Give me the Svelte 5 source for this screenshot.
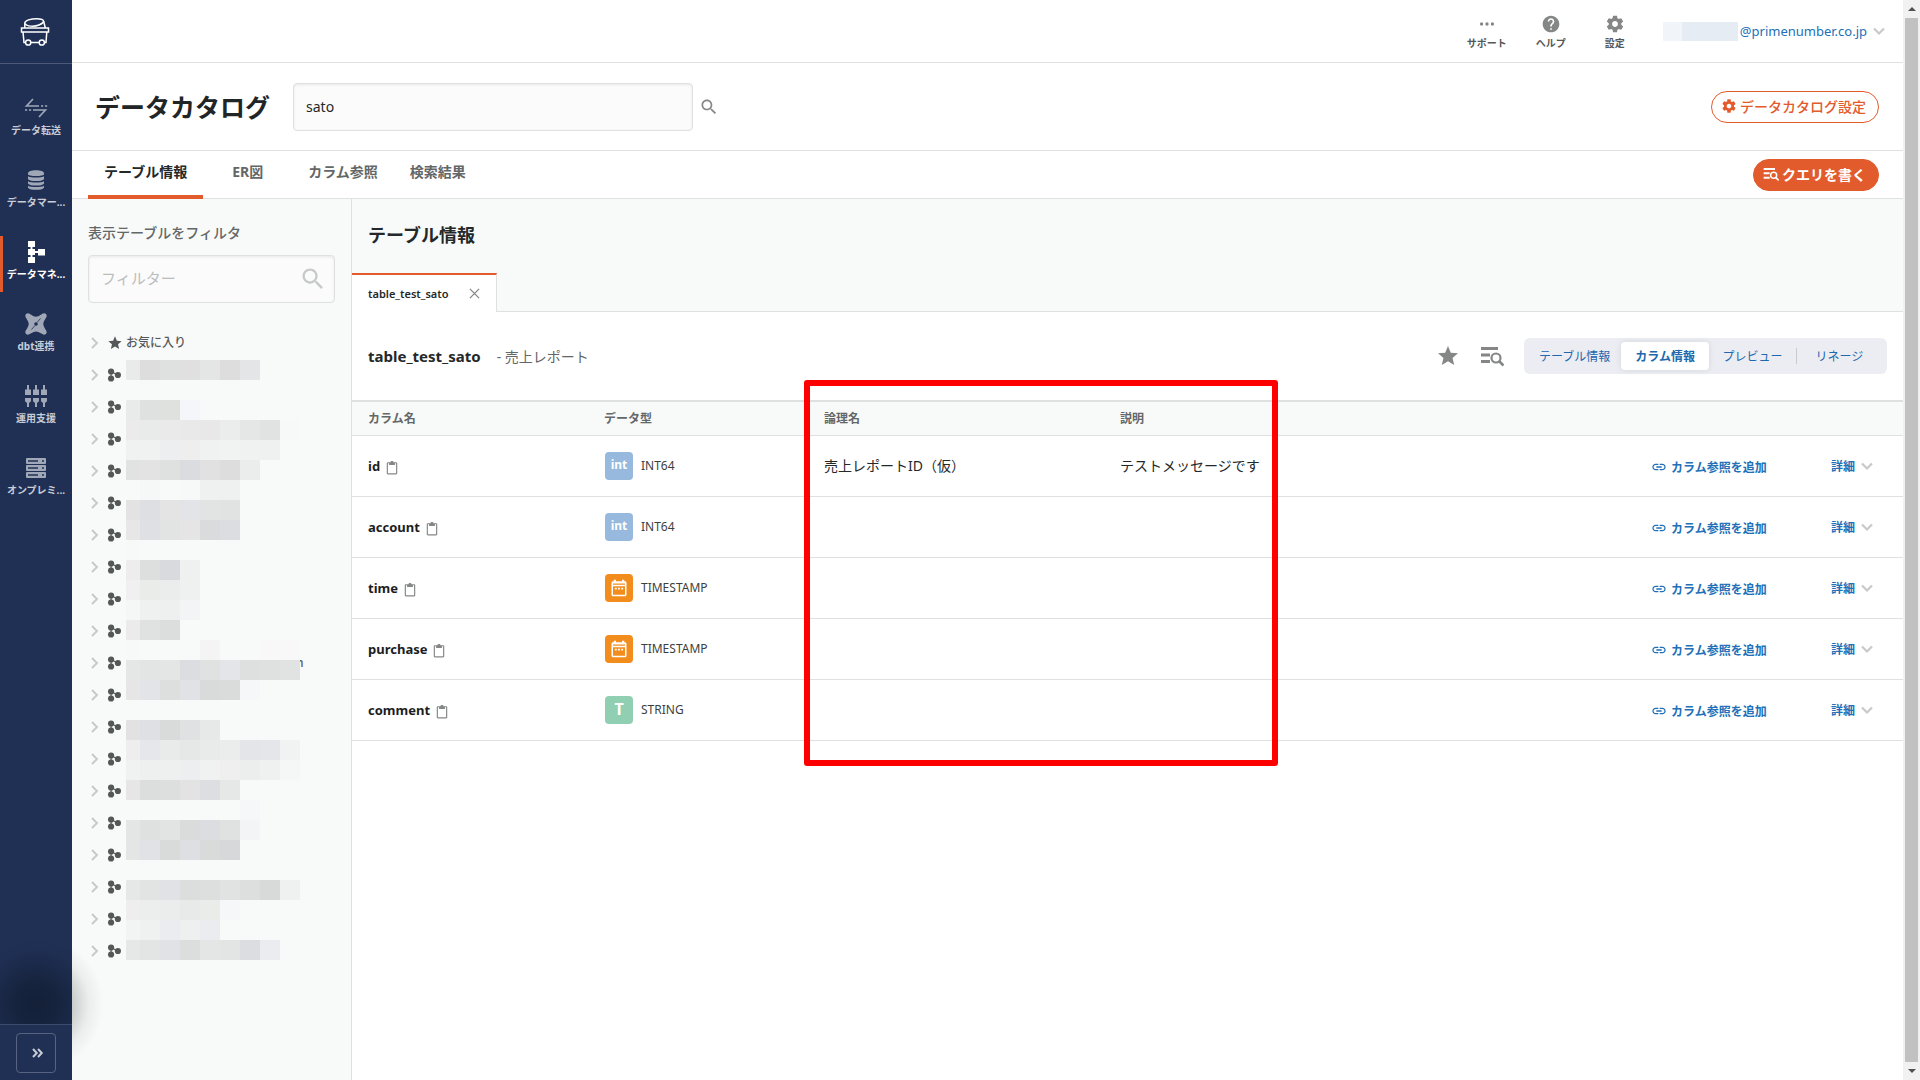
<script lang="ts">
  const navItems = [
    { icon: 'transfer', label: 'データ転送' },
    { icon: 'database', label: 'データマー...' },
    { icon: 'tree', label: 'データマネ...', active: true },
    { icon: 'dbt', label: 'dbt連携' },
    { icon: 'plugs', label: '運用支援' },
    { icon: 'servers', label: 'オンプレミ...' },
  ];

  const headerItems = [
    { icon: 'dots', label: 'サポート' },
    { icon: 'help', label: 'ヘルプ' },
    { icon: 'gear', label: '設定' },
  ];

  const tabs = ['テーブル情報', 'ER図', 'カラム参照', '検索結果'];
  const views = ['テーブル情報', 'カラム情報', 'プレビュー', 'リネージ'];

  let activeTab = $state('テーブル情報');
  let activeView = $state('カラム情報');
  let search = $state('sato');
  let filter = $state('');

  const datasets = Array.from({ length: 19 }, (_, i) => ({ tail: i === 9 ? 'n' : '' }));

  const columns = [
    { name: 'id', kind: 'int', type: 'INT64', logical: '売上レポートID（仮）', note: 'テストメッセージです' },
    { name: 'account', kind: 'int', type: 'INT64', logical: '', note: '' },
    { name: 'time', kind: 'date', type: 'TIMESTAMP', logical: '', note: '' },
    { name: 'purchase', kind: 'date', type: 'TIMESTAMP', logical: '', note: '' },
    { name: 'comment', kind: 'text', type: 'STRING', logical: '', note: '' },
  ];

  // masked dataset names, one line per 20px band, "-" leaves a cell clear
  const mask = [
    'e9eaea dedddd dfe0e0 dfe0df e4e5e5 dcdddc e4e5e7',
    '-',
    'e9ebea dfe1e0 dfe1df f5f6f9',
    'eaebea e9eaea e9eae9 e8e9e8 e7e8e7 ebedec e5e7e6 e1e3e2 f7f8f8',
    'f0f1f1 f0f1f1 edeef0 edeeed f0f1f1 f1f3f2 f0f1f1 eff1f0 f8f9f9',
    'e1e3e2 e2e3e2 dfe1e0 dbdcdf e0e1e0 dcdddc ebedec',
    '- f6f7f7 - f7f8f8 eff0f0 eff0f0',
    'e3e3e3 dedfe2 e4e4e4 e3e4e7 e2e4e3 e1e3e2',
    'e7e7e7 dfe0e3 e2e4e3 e5e5e5 dadbdd dcdde0',
    'f7f8f8',
    'ededed dddfde d9dadd eff0f0',
    'f0f0f0 eaecea ebedec eff0f0',
    'f5f6f6 eff1f0 eef0ef f3f4f6',
    'ebebeb e0e2e1 dcdedd',
    'f7f8f8 - - - f5f4f4 - - f7f8f7 f7f8f7',
    'e5e7e6 e3e5e4 e4e6e5 dcdde0 e0e2e1 e4e5e8 dee0df dfe1e0 e1e3e2',
    'e6e6e6 e3e4e7 dddfde e1e2e5 d9dbda dadcdb f6f7f9',
    '-',
    'e2e2e2 dfe0e3 d9dbda e0e1e3 e7e9e8',
    'eeeeee e6e7ea e9ebea e6e8e7 e9ebea ebedec e4e5e8 e5e6e9 f1f3f2',
    'f0f2f1 eef0ef eef0ef edeef0 f0f2f1 efefef eceeed eff1f0 f5f7f6',
    'e6e6e6 dcdedd dddfde e3e3e3 dddee1 e6e8e7',
    '- - - f8f9f9 - - f6f7f9',
    'e4e6e5 dfe1e0 e2e4e3 dadcdb dcdde0 e0e2e1 f3f4f6',
    'e4e6e5 e1e2e5 d9dbda dedfe2 d9dbda d7d8da',
    '-',
    'e6e8e7 e2e4e3 e1e2e5 dcdedd dddfde e1e3e2 dddfde d8dad9 eff1f0',
    'eeeeee eceeed ebedec e8eae9 eaecea f6f7f9',
    'f2f4f3 eff1f0 ebecef eef0ef ebecef',
    'e6e8e7 e3e5e4 e1e2e5 dcdedd e4e6e5 e3e5e4 dcdde0 ebecef',
  ].map((line) => line.split(' '));
</script>

{#snippet icon(name: string, size = 24)}
  <svg width={size} height={size} viewBox="0 0 24 24" fill="currentColor" aria-hidden="true">
    {#if name === 'transfer'}
      <g fill="none" stroke="currentColor" stroke-width="1.6">
        <path d="M9 3L2.500 10H15" /><path d="M17 10h2.200M21 10h2.200" />
        <path d="M15 21l6.500-7H9" /><path d="M1 14h2.200M5 14h2.200" />
      </g>
    {:else if name === 'database'}
      <path d="M4 5c0-1.600 3.600-2.800 8-2.800s8 1.200 8 2.800v1.500c0 .8-3.600 1.500-8 1.500s-8-.7-8-1.500z" />
      <path d="M4 8.200c1.600 1 4.700 1.400 8 1.400s6.400-.4 8-1.400v3c-1.200 1.300-4.400 1.800-8 1.800s-6.800-.5-8-1.800z" />
      <path d="M4 13.200c1.600 1 4.700 1.400 8 1.400s6.400-.4 8-1.400v2.500c-1.200 1.300-4.400 1.800-8 1.800s-6.800-.5-8-1.800z" />
      <path d="M4 17.700c1.600 1 4.700 1.400 8 1.400s6.400-.4 8-1.400v2c-1.200 1.600-4.400 2.100-8 2.100s-6.800-.5-8-2.100z" />
    {:else if name === 'tree'}
      <path d="M4 1h7v6H8.500v2H11v2h3V9h7v6.500h-7V13h-3v2H8.500v2H11v6H4v-6h2.500v-2H4V9h2.500V7H4z" />
    {:else if name === 'dbt'}
      <path fill-rule="evenodd" d="M4 1.300c2 .2 5 3.400 8 3.400s6-3.200 8-3.400c1.800 0 2.700 1.200 2.700 2.700-.2 2-3.400 5-3.400 8s3.200 6 3.400 8c0 1.600-1.200 2.700-2.700 2.700-2-.2-5-3.200-8-3.200s-6 3-8 3.200c-1.600 0-2.700-1.200-2.700-2.700.2-2 3.400-5 3.400-8s-3.200-6-3.400-8c0-1.600 1.200-2.700 2.700-2.700zM12 10.200a1.800 1.800 0 1 0 0 3.600 1.800 1.800 0 0 0 0-3.600z" />
      <path d="M13 10.500l3.500-4M11 13.500l-3.500 4" stroke="#203055" stroke-width=".8" />
    {:else if name === 'plugs'}
      {#each [1, 9, 17] as x}
        <path d="M{x + 2} 1h2v4.500h2V11H{x}V5.500h2zM{x} 14h6v3.200l-2 1.800v4H{x + 2}v-4l-2-1.800z" />
      {/each}
    {:else if name === 'servers'}
      {#each [2, 9, 16] as y}
        <path fill-rule="evenodd" d="M3 {y}h18a1 1 0 0 1 1 1v4a1 1 0 0 1-1 1H3a1 1 0 0 1-1-1v-4a1 1 0 0 1 1-1zm1 2.300v1.400h10v-1.400zm14 0v1.400h2v-1.400z" />
      {/each}
    {:else if name === 'dots'}
      <circle cx="5.500" cy="12" r="2" /><circle cx="12" cy="12" r="2" /><circle cx="18.500" cy="12" r="2" />
    {:else if name === 'help'}
      <path d="M12 2C6.480 2 2 6.480 2 12s4.480 10 10 10 10-4.480 10-10S17.520 2 12 2zm1 17h-2v-2h2v2zm2.070-7.750l-.9.920C13.450 12.900 13 13.500 13 15h-2v-.5c0-1.100.45-2.100 1.170-2.830l1.240-1.260c.37-.36.59-.86.59-1.410 0-1.100-.9-2-2-2s-2 .9-2 2H8c0-2.210 1.790-4 4-4s4 1.790 4 4c0 .88-.36 1.680-.93 2.250z" />
    {:else if name === 'gear'}
      <path d="M19.430 12.980c.04-.32.07-.64.07-.98s-.03-.66-.07-.98l2.110-1.650c.19-.15.24-.42.12-.64l-2-3.460c-.12-.22-.39-.3-.61-.22l-2.490 1c-.52-.4-1.080-.73-1.690-.98l-.38-2.650C14.460 2.180 14.250 2 14 2h-4c-.25 0-.46.18-.49.42l-.38 2.650c-.61.25-1.170.59-1.690.98l-2.490-1c-.23-.09-.49 0-.61.22l-2 3.460c-.13.22-.07.49.12.64l2.110 1.650c-.04.32-.07.65-.07.98s.03.66.07.98l-2.110 1.650c-.19.15-.24.42-.12.64l2 3.460c.12.22.39.3.61.22l2.490-1c.52.4 1.080.73 1.690.98l.38 2.650c.03.24.24.42.49.42h4c.25 0 .46-.18.49-.42l.38-2.650c.61-.25 1.170-.59 1.690-.98l2.490 1c.23.09.49 0 .61-.22l2-3.460c.12-.22.07-.49-.12-.64l-2.110-1.650zM12 15.500c-1.930 0-3.500-1.570-3.500-3.500s1.570-3.500 3.500-3.500 3.500 1.570 3.500 3.500-1.570 3.500-3.500 3.500z" />
    {:else if name === 'search'}
      <path d="M15.500 14h-.79l-.28-.27C15.410 12.590 16 11.110 16 9.500 16 5.910 13.090 3 9.500 3S3 5.910 3 9.500 5.910 16 9.500 16c1.610 0 3.090-.59 4.230-1.570l.27.28v.79l5 4.990L20.490 19l-4.990-5zm-6 0C7.010 14 5 11.990 5 9.500S7.010 5 9.500 5 14 7.010 14 9.500 11.990 14 9.500 14z" />
    {:else if name === 'query'}
      <path d="M1 3h17v3H1zM1 9.500h9v3H1zM1 16h9v3H1z" />
      <circle cx="16" cy="14" r="4.500" fill="none" stroke="currentColor" stroke-width="2.200" />
      <path d="M19 17l4.500 4.500" stroke="currentColor" stroke-width="2.600" />
    {:else if name === 'star'}
      <path d="M12 17.270L18.180 21l-1.640-7.030L22 9.240l-7.190-.61L12 2 9.190 8.630 2 9.240l5.460 4.730L5.820 21z" />
    {:else if name === 'cluster'}
      <circle cx="7" cy="6" r="5.300" /><circle cx="7" cy="18" r="5.300" /><circle cx="18.700" cy="12" r="5.300" />
      <path d="M7 5v14M7 6l11 6" stroke="currentColor" stroke-width="2" />
    {:else if name === 'close'}
      <path d="M2 2l20 20M22 2L2 22" fill="none" stroke="currentColor" stroke-width="2.800" />
    {:else if name === 'clipboard'}
      <path d="M19 2h-4.180C14.400.84 13.300 0 12 0S9.600.84 9.180 2H5c-1.100 0-2 .9-2 2v17c0 1.100.9 2 2 2h14c1.100 0 2-.9 2-2V4c0-1.100-.9-2-2-2zm0 19H5V4h2v3h10V4h2v17z" />
    {:else if name === 'calendar'}
      <path fill-rule="evenodd" d="M20 3h-1V1h-3v2H8V1H5v2H4c-1.100 0-2 .9-2 2v16c0 1.100.9 2 2 2h16c1.100 0 2-.9 2-2V5c0-1.100-.9-2-2-2zM4 21V9.500h16V21zM4 7.500V6h16v1.500z" />
      <path d="M6.500 11.500h2.500v2.500H6.500zM10.700 11.500h2.500v2.500h-2.500zM15 11.500h2.500v2.500H15z" />
    {:else if name === 'link'}
      <path d="M3.900 12c0-1.710 1.390-3.100 3.100-3.100h4V7H7c-2.760 0-5 2.240-5 5s2.240 5 5 5h4v-1.900H7c-1.710 0-3.100-1.390-3.100-3.100zM8 13h8v-2H8v2zm9-6h-4v1.900h4c1.710 0 3.100 1.390 3.100 3.100s-1.390 3.100-3.100 3.100h-4V17h4c2.760 0 5-2.240 5-5s-2.240-5-5-5z" />
    {:else if name === 'right'}
      <path d="M6 2l10 10L6 22" fill="none" stroke="currentColor" stroke-width="4" />
    {:else if name === 'down'}
      <path d="M2 7l10 10L22 7" fill="none" stroke="currentColor" stroke-width="4.500" />
    {:else if name === 'expand'}
      <path d="M2 4l7.500 8L2 20M12 4l7.500 8L12 20" fill="none" stroke="currentColor" stroke-width="4" />
    {/if}
  </svg>
{/snippet}

<div class="page">
  <aside class="sidebar">
    <a class="logo" href="#top" aria-label="ホーム">
      <svg width="30" height="30" viewBox="0 0 30 30" fill="none" stroke="#fff" stroke-width="1.500">
        <path d="M1.500 11h27v4h-27zM3 15l1 10.500h2M26.800 15l-.8 10.500h-2M11 25.500h8" />
        <path d="M4.800 11V6c0-2.500 6-4.300 12-4.300 4 0 6.500.8 6.800 2.300L25.300 11" />
        <path d="M5 6.500c1.500 3 9 3.500 14 1.500 3-1.200 4.700-2.500 4.500-4" />
        <circle cx="8.200" cy="25.500" r="2.600" /><circle cx="21.800" cy="25.500" r="2.600" />
      </svg>
    </a>
    <nav class="nav">
      {#each navItems as item}
        <a class="nav-item" class:active={item.active} href="#{item.icon}">
          {@render icon(item.icon)}
          <span>{item.label}</span>
        </a>
      {/each}
    </nav>
    <div class="glow"></div>
    <div class="side-foot">
      <button aria-label="メニューを開く">{@render icon('expand', 12)}</button>
    </div>
  </aside>

  <div class="main">
    <header class="topbar">
      {#each headerItems as item}
        <button class="top-item">
          {@render icon(item.icon, 20)}
          <span>{item.label}</span>
        </button>
      {/each}
      <button class="account">
        <span class="masked"></span>
        <span>@primenumber.co.jp</span>
        {@render icon('down', 12)}
      </button>
    </header>

    <div class="titlebar">
      <h1>データカタログ</h1>
      <input class="field search" type="text" aria-label="検索" bind:value={search} />
      <button class="search-btn" aria-label="検索">{@render icon('search', 20)}</button>
      <button class="pill outline">{@render icon('gear', 16)}データカタログ設定</button>
    </div>

    <div class="tabbar">
      <nav class="tabs">
        {#each tabs as tab}
          <button class="tab" class:active={tab === activeTab} onclick={() => (activeTab = tab)}>{tab}</button>
        {/each}
      </nav>
      <button class="pill solid">{@render icon('query', 16)}クエリを書く</button>
    </div>

    <div class="body">
      <section class="filter">
        <label for="filter">表示テーブルをフィルタ</label>
        <div class="filter-box">
          <input id="filter" class="field" type="text" placeholder="フィルター" bind:value={filter} />
          {@render icon('search', 28)}
        </div>
        <div class="tree">
          <button class="node">
            {@render icon('right', 12)}
            {@render icon('star', 16)}
            <span>お気に入り</span>
          </button>
          {#each datasets as set}
            <button class="node" aria-label="データセット">
              {@render icon('right', 12)}
              {@render icon('cluster', 14)}
              {#if set.tail}<span class="tail">{set.tail}</span>{/if}
            </button>
          {/each}
          <div class="mask">
            {#each mask as row}
              <div class="mask-row">
                {#each row as cell}
                  <i style="background: {cell === '-' ? 'transparent' : '#' + cell}"></i>
                {/each}
              </div>
            {/each}
          </div>
        </div>
      </section>

      <section class="content">
        <div class="content-head">
          <h2>テーブル情報</h2>
          <div class="sheet-tabs">
            <div class="sheet">
              <span>table_test_sato</span>
              <button aria-label="閉じる">{@render icon('close', 11)}</button>
            </div>
          </div>
        </div>

        <div class="table-head">
          <h3>table_test_sato</h3>
          <span class="sub">- 売上レポート</span>
          <button class="tool" aria-label="お気に入り">{@render icon('star', 24)}</button>
          <button class="tool" aria-label="クエリ">{@render icon('query', 24)}</button>
          <div class="views">
            {#each views as view}
              <button class:active={view === activeView} onclick={() => (activeView = view)}>{view}</button>
            {/each}
          </div>
        </div>

        <div class="table-wrap">
          <table>
            <colgroup>
              <col class="c-name" /><col class="c-type" /><col class="c-logical" /><col />
              <col class="c-ref" /><col class="c-more" />
            </colgroup>
            <thead>
              <tr><th>カラム名</th><th>データ型</th><th>論理名</th><th>説明</th><th></th><th></th></tr>
            </thead>
            <tbody>
              {#each columns as col}
                <tr>
                  <td>
                    <div class="cell name">
                      <b>{col.name}</b>
                      <button aria-label="コピー">{@render icon('clipboard', 14)}</button>
                    </div>
                  </td>
                  <td>
                    <div class="cell type">
                      <span class="badge {col.kind}">
                        {#if col.kind === 'date'}{@render icon('calendar', 18)}{:else}{col.kind === 'int' ? 'int' : 'T'}{/if}
                      </span>
                      <span class="type-name">{col.type}</span>
                    </div>
                  </td>
                  <td class="plain">{col.logical}</td>
                  <td class="plain">{col.note}</td>
                  <td><a class="cell ref" href="#ref-{col.name}">{@render icon('link', 16)}カラム参照を追加</a></td>
                  <td><button class="cell more">詳細{@render icon('down', 12)}</button></td>
                </tr>
              {/each}
            </tbody>
          </table>
          <div class="callout"></div>
        </div>
      </section>
    </div>
  </div>

  <div class="scrollbar">
    <span class="arrow up"></span>
    <span class="thumb"></span>
    <span class="arrow down"></span>
  </div>
</div>

<style>
  :global(body) {
    margin: 0;
    font-family: "Noto Sans", "Noto Sans CJK JP", sans-serif;
    font-size: 14px;
    color: #252829;
  }
  .page {
    display: grid;
    grid-template-columns: 72px 1fr 17px;
    height: 100vh;
    background: #fff;
    overflow: hidden;
  }
  h1, h2, h3 { margin: 0; }
  svg { display: block; flex: none; }
  button, input { font: inherit; color: inherit; }
  button {
    padding: 0;
    border: 0;
    background: none;
    cursor: pointer;
  }
  a { text-decoration: none; }

  /* sidebar */
  .sidebar {
    position: relative;
    z-index: 1;
    display: flex;
    flex-direction: column;
    background: #203055;
  }
  .logo {
    height: 63px;
    display: grid;
    place-items: center;
    padding-right: 2px;
    border-bottom: 1px solid #4d5977;
  }
  .nav {
    flex: 1;
    display: flex;
    flex-direction: column;
    gap: 16px;
    padding-top: 28px;
  }
  .nav-item {
    height: 56px;
    box-sizing: border-box;
    display: flex;
    flex-direction: column;
    align-items: center;
    gap: 2px;
    padding-top: 4px;
    color: #a0a8b8;
    font-size: 10px;
    line-height: 16px;
    font-weight: 700;
    white-space: nowrap;
  }
  .nav-item span { color: #c7ccd6; }
  .nav-item.active {
    color: #fff;
    background: linear-gradient(#e25b2c, #e25b2c) left / 3px 100% no-repeat;
  }
  .nav-item.active span { color: #fff; }
  .glow {
    position: absolute;
    left: -32px;
    bottom: 8px;
    width: 136px;
    height: 136px;
    background: radial-gradient(circle closest-side, rgba(0, 8, 12, 0.4), rgba(0, 8, 12, 0.32) 30%, rgba(0, 8, 12, 0.18) 54%, rgba(0, 8, 12, 0.05) 78%, transparent);
    pointer-events: none;
  }
  .side-foot {
    position: relative;
    height: 55px;
    display: grid;
    place-items: center;
    background: #203055;
    border-top: 1px solid #3b496a;
  }
  .side-foot button {
    box-sizing: border-box;
    width: 40px;
    height: 40px;
    display: grid;
    place-items: center;
    padding-left: 4px;
    border: 1px solid #58647f;
    border-radius: 4px;
    color: #c7ccd6;
  }

  .main {
    min-width: 0;
    display: flex;
    flex-direction: column;
  }
  .topbar {
    height: 62px;
    display: flex;
    justify-content: flex-end;
    align-items: center;
    border-bottom: 1px solid #dfe1e1;
  }
  .top-item {
    width: 64px;
    height: 40px;
    display: flex;
    flex-direction: column;
    align-items: center;
    color: #858686;
    font-size: 10px;
    font-weight: 700;
    line-height: 14px;
  }
  .top-item svg { margin: 3px 0 2px; }
  .top-item span { color: #555858; }
  .account {
    display: flex;
    align-items: center;
    margin: 0 18px 0 16px;
    color: #2170b8;
    font-size: 13px;
  }
  .account svg { margin-left: 6px; color: #c8caca; }
  .masked {
    width: 75px;
    height: 19px;
    margin-right: 2px;
    background: linear-gradient(90deg, #f1f5f9 19px, #e5ecf4 19px);
  }

  .titlebar {
    height: 87px;
    display: flex;
    align-items: center;
    padding: 0 24px 0 23px;
    border-bottom: 1px solid #dfe1e1;
  }
  h1 {
    font-size: 25px;
    line-height: 32px;
    margin-right: 23px;
    color: #212526;
  }
  .field {
    box-sizing: border-box;
    height: 48px;
    padding: 0 12px;
    border: 1px solid #dfe1e1;
    border-radius: 4px;
    background: #fbfbfb;
    box-shadow: inset 0 1px 3px rgba(0, 0, 0, 0.08);
    outline: none;
  }
  .search { width: 400px; }
  .search-btn { margin-left: 6px; color: #858686; }
  .pill {
    height: 32px;
    box-sizing: border-box;
    display: flex;
    align-items: center;
    gap: 3px;
    margin-left: auto;
    padding: 0 12px 2px 9px;
    border: 1px solid #e25b2c;
    border-radius: 16px;
    white-space: nowrap;
  }
  .outline { color: #e25b2c; font-weight: 500; }
  .solid { background: #e25b2c; color: #fff; font-weight: 700; }

  .tabbar {
    height: 47px;
    display: flex;
    align-items: center;
    padding: 0 24px 0 16px;
    border-bottom: 1px solid #dfe1e1;
  }
  .tabs { display: flex; align-self: stretch; }
  .tab {
    height: 48px;
    padding: 0 16px 4px;
    border-bottom: 4px solid transparent;
    color: #646767;
    font-weight: 700;
  }
  .tab:nth-child(-n + 2) { margin-right: 13px; }
  .tab.active { color: #252829; border-color: #e25b2c; }

  .body {
    flex: 1;
    min-height: 0;
    display: flex;
  }
  .filter {
    width: 279px;
    box-sizing: border-box;
    padding: 24px 16px;
    background: #f8faf9;
  }
  .filter label {
    display: block;
    line-height: 20px;
    margin-bottom: 12px;
    color: #646767;
    font-weight: 500;
  }
  .filter-box { position: relative; color: #c8caca; margin-bottom: 24px; }
  .filter-box input { width: 100%; padding-bottom: 2px; font-size: 15px; color: #252829; }
  .filter-box input::placeholder { color: #bbbdbd; }
  .filter-box svg { position: absolute; right: 8px; top: 10px; }
  .tree { position: relative; color: #555858; font-size: 12px; }
  .node {
    width: 100%;
    height: 32px;
    display: flex;
    align-items: center;
    font-weight: 500;
  }
  .node svg:first-child { color: #c8caca; margin: 0 6px 0 1px; }
  .node span { margin: 0 0 2px 3px; }
  .node .tail { margin: 0 0 2px 175px; }
  .mask {
    position: absolute;
    left: 38px;
    top: 33px;
  }
  .mask-row {
    display: grid;
    grid-template-columns: 14px;
    grid-auto-columns: 20px;
    grid-auto-flow: column;
    justify-content: start;
    height: 20px;
  }

  .content {
    flex: 1;
    min-width: 0;
    border-left: 1px solid #dfe1e1;
  }
  .content-head { background: #f8faf9; }
  h2 { font-size: 18px; line-height: 26px; padding: 23px 16px 25px; }
  .sheet-tabs { display: flex; height: 39px; }
  .sheet-tabs::after { content: ""; flex: 1; border-bottom: 1px solid #dfe1e1; }
  .sheet {
    display: flex;
    align-items: center;
    gap: 20px;
    padding: 0 16px;
    background: #fff;
    border-top: 2px solid #e25b2c;
    border-right: 1px solid #dfe1e1;
    font-size: 11px;
    font-weight: 600;
  }
  .sheet button { color: #858686; }

  .table-head {
    height: 88px;
    box-sizing: border-box;
    display: flex;
    align-items: center;
    padding: 0 16px;
  }
  h3 { font-size: 15px; }
  .sub { margin: 0 auto 0 16px; color: #646767; }
  .tool { margin-right: 20px; color: #858686; }
  .views {
    display: flex;
    height: 28px;
    padding: 4px;
    border-radius: 6px;
    background: #ecedf2;
    color: #2167ae;
    font-size: 12px;
  }
  .views button {
    min-width: 87px;
    padding: 0 11px;
  }
  .views button:last-child {
    background: linear-gradient(#c8cad0, #c8cad0) left / 1px 16px no-repeat;
  }
  .views .active {
    padding: 0 14px;
    border-radius: 4px;
    background: #fff;
    box-shadow: 0 0 6px rgba(0, 0, 0, 0.1);
    font-weight: 700;
  }

  .table-wrap { position: relative; }
  table {
    width: 100%;
    table-layout: fixed;
    border-collapse: separate;
    border-spacing: 0;
    border-top: 2px solid #dfe1e1;
  }
  .c-name { width: 236px; }
  .c-type { width: 220px; }
  .c-logical { width: 296px; }
  .c-ref { width: 180px; }
  .c-more { width: 88px; }
  th, td {
    box-sizing: border-box;
    padding: 0 0 0 16px;
    border-bottom: 1px solid #dfe1e1;
    text-align: left;
    white-space: nowrap;
  }
  th {
    height: 34px;
    padding-bottom: 1px;
    background: #f8faf9;
    color: #646767;
    font-size: 12px;
    font-weight: 600;
  }
  td { height: 61px; }
  .plain { padding-bottom: 2px; }
  .cell { display: flex; align-items: center; }
  .name { gap: 5px; color: #1b1d1e; font-size: 13px; }
  .name button { color: #858686; padding-top: 3px; }
  .type { gap: 8px; padding-left: 1px; font-size: 12px; color: #3c3f40; }
  .type-name { padding-bottom: 2px; }
  .badge {
    box-sizing: border-box;
    width: 28px;
    height: 28px;
    display: grid;
    place-items: center;
    border-radius: 4px;
    color: #fff;
    font-weight: 700;
  }
  .int { background: #96b9dd; padding-bottom: 3px; }
  .date { background: #f28c1c; }
  .text { background: #90cfb1; padding-bottom: 3px; font-size: 16px; }
  .ref, .more { gap: 4px; color: #2170b8; font-size: 12px; font-weight: 700; }
  .ref { padding-top: 2px; }
  .more { gap: 6px; }
  .more svg { color: #c8caca; }
  .callout {
    position: absolute;
    left: 452px;
    top: -20px;
    width: 462px;
    height: 374px;
    border: 6px solid #f00;
    border-radius: 3px;
    pointer-events: none;
  }

  .scrollbar {
    display: flex;
    flex-direction: column;
    align-items: center;
    background: #f1f1f1;
  }
  .thumb { flex: 1; width: 13px; background: #c1c1c1; }
  .arrow { height: 18px; display: grid; place-items: center; }
  .arrow::before {
    content: "";
    border: 4px solid transparent;
    border-top: 0;
    border-bottom-color: #505050;
  }
  .arrow.down::before {
    border-top: 4px solid #505050;
    border-bottom: 0;
  }
</style>
